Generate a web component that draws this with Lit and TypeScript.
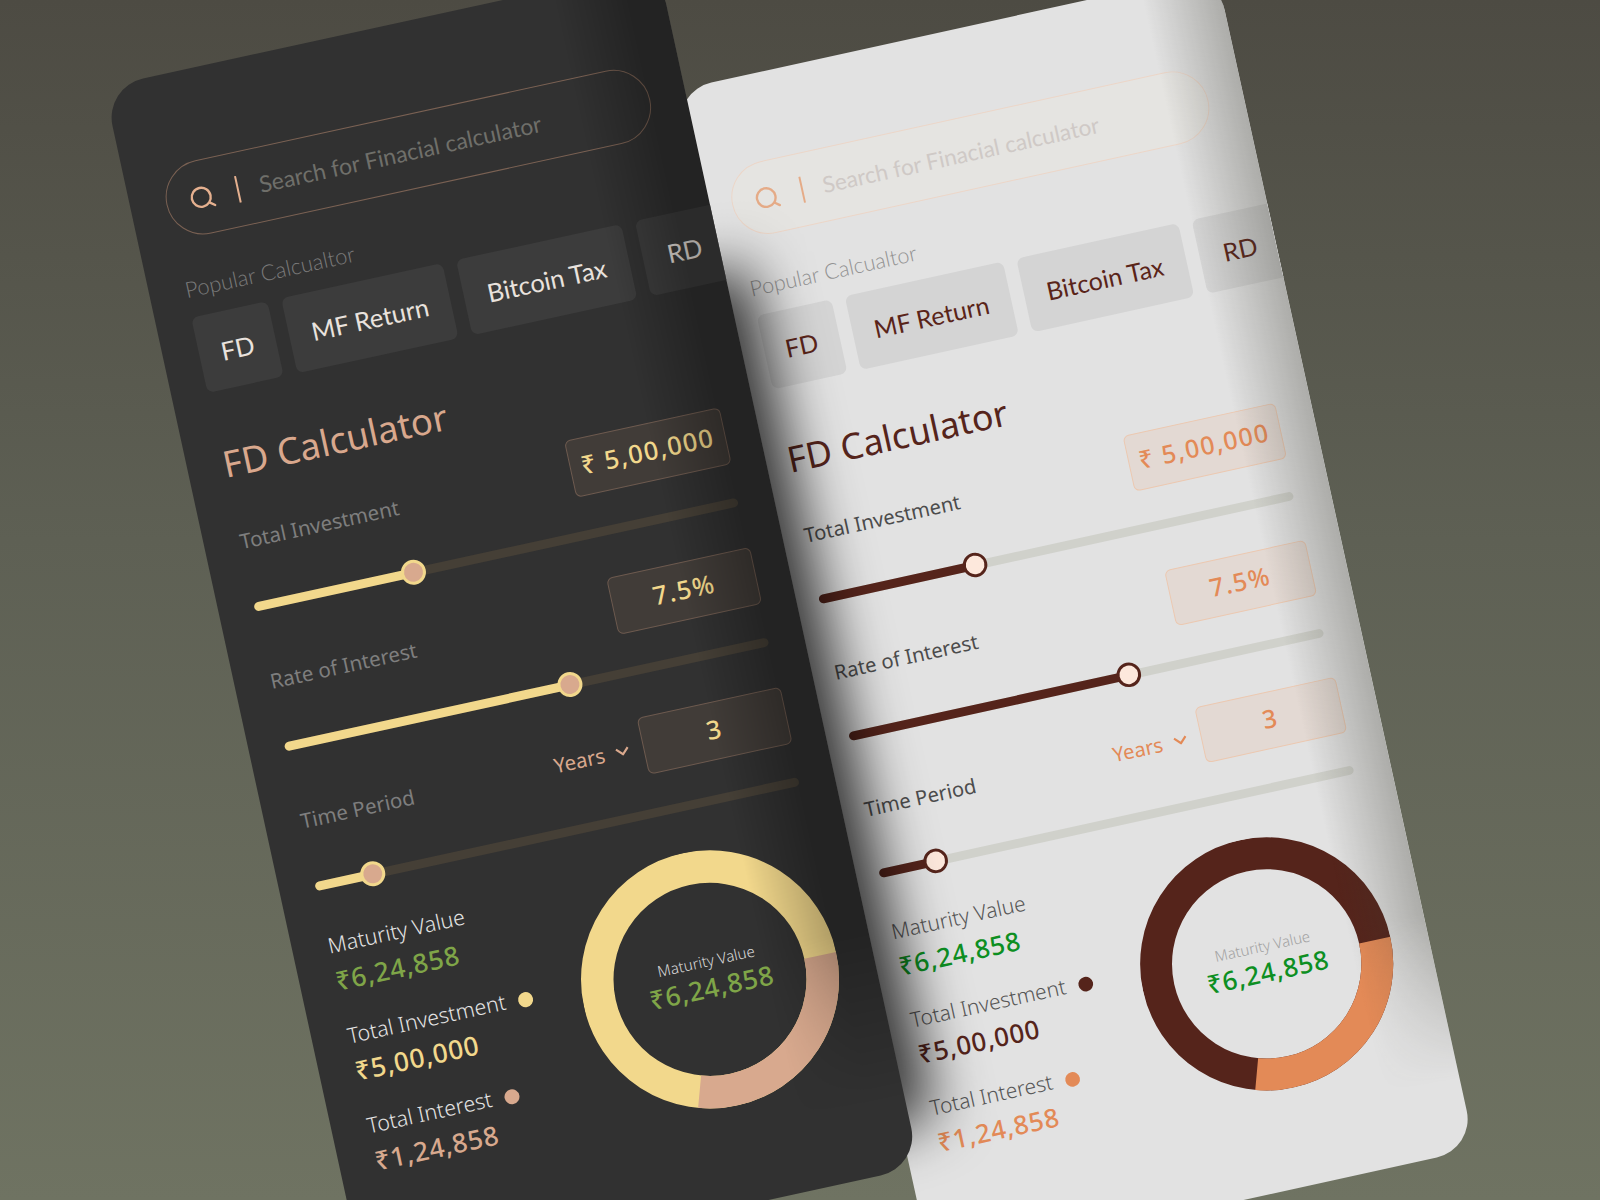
import { LitElement, html, css, svg } from "lit";
import { customElement, property } from "lit/decorators.js";

const SLIDERS = [
  { label: "Total Investment", value: "₹ 5,00,000", pct: 33, wide: true, unit: false },
  { label: "Rate of Interest", value: "7.5%", pct: 59, wide: false, unit: false },
  { label: "Time Period", value: "3", pct: 12, wide: false, unit: true },
];
const SUMMARY = [
  { label: "Maturity Value", value: "₹6,24,858", cls: "green", dot: "" },
  { label: "Total Investment", value: "₹5,00,000", cls: "invest", dot: "invest" },
  { label: "Total Interest", value: "₹1,24,858", cls: "interest", dot: "interest" },
];
const CHIPS = ["FD", "MF Return", "Bitcoin Tax", "RD"];

@customElement("fd-card")
class FdCard extends LitElement {
  @property() theme = "dark";

  static styles = css`
    :host { display: block; position: absolute; width: 567px; height: 1229px; transform-origin: 0 0; }
    :host([theme="dark"]) {
      left: 104px; top: 87.4px; transform: rotate(-12.3deg);
      --pad: 91px 36px 0 36px; --search-extra: 0px; --edge-start: 81%; --edge-end: 94%;
      --card: #313131; --chip: #3c3c3c; --chip-text: #e9e2dd; --search-border: #7a6153; --search-bg: transparent;
      --placeholder: #6f6f6a; --popular: #7a7a7a; --icon: #e5b08f; --title: #d9a88d; --box: #413c38;
      --box-border: #6d5a4f; --value: #f2d88c; --track: #453f36; --fill: #f2d88c; --thumb: #d8a98e;
      --label: #7e7e7e; --years: #d9a88d; --list: #e4e4e4; --green: #7fa548; --invest: #f2d88c;
      --interest: #d8a98e; --center: #d8d8d8; --edge: rgba(0, 0, 0, 0.28);
    }
    :host([theme="light"]) {
      left: 672.9px; top: 90.8px; transform: rotate(-12.4deg) scale(0.981);
      --pad: 89px 38.5px 0 33.5px; --search-extra: 2.5px; --edge-start: 86%; --edge-end: 100%;
      --card: #e2e2e2; --chip: #d4d4d4; --chip-text: #5a2419; --search-border: #ecd6c8; --search-bg: #e5e4e1;
      --placeholder: #cfc9c6; --popular: #929292; --icon: #e5ab87; --title: #55241b; --box: #e3d9d3;
      --box-border: #ecc8b0; --value: #e38a57; --track: #d0d1cb; --fill: #55241b; --thumb: #fde8dc;
      --label: #4c4c4c; --years: #e38a57; --list: #565656; --green: #0d8f22; --invest: #55241b;
      --interest: #e38a57; --center: #a2a2a2; --edge: rgba(60, 60, 50, 0.32);
    }
    .card {
      position: relative; box-sizing: border-box; width: 100%; height: 100%; padding: var(--pad);
      background: var(--card); border-radius: 40px; overflow: hidden; display: flex; flex-direction: column;
      font-family: "Noto Sans", sans-serif;
    }
    .search {
      flex: none; box-sizing: border-box; height: 75px; margin-right: calc(0px - var(--search-extra));
      border: 1.5px solid var(--search-border); border-radius: 38px;
      background: var(--search-bg); display: flex; align-items: center; padding-left: 23px;
    }
    .search svg { flex: none; width: 26px; height: 24px; fill: none; stroke: var(--icon); stroke-width: 2.4; stroke-linecap: round; }
    .divider { flex: none; width: 2px; height: 27px; background: var(--icon); margin: 0 21px 0 22px; }
    .placeholder { font: 400 23px "Lato", "Noto Sans", sans-serif; color: var(--placeholder); white-space: nowrap; padding-bottom: 2px; }
    .popular { margin-top: 37px; font: 300 22px/26px "Lato", "Noto Sans", sans-serif; color: var(--popular); white-space: nowrap; }
    .chips { flex: none; display: flex; gap: 14px; margin-top: 15px; height: 77px; }
    .chip {
      flex: none; display: flex; align-items: center; justify-content: center; width: 85px; background: var(--chip); border-radius: 7px;
      font: 400 25.5px "Lato", "Noto Sans", sans-serif; color: var(--chip-text); white-space: nowrap;
    }
    .chip:nth-child(1) { width: 78px; }
    .chip:nth-child(2) { width: 165px; }
    .chip:nth-child(3) { width: 169px; }
    .title { margin-top: 51px; font-size: 36.6px; line-height: 44px; font-weight: 400; color: var(--title); white-space: nowrap; }
    .rows { margin-top: 28px; display: flex; flex-direction: column; gap: 42.5px; }
    .head { display: flex; align-items: center; justify-content: space-between; height: 58px; margin-right: -2px; }
    .label { font-size: 20.6px; line-height: 26px; color: var(--label); white-space: nowrap; }
    .right { display: flex; align-items: center; gap: 14px; }
    .years { display: flex; align-items: center; gap: 11px; font-size: 20.5px; color: var(--years); }
    .years svg { width: 14px; height: 9px; fill: none; stroke: var(--years); stroke-width: 2.2; }
    .box {
      box-sizing: border-box; width: 147px; height: 58px; padding-bottom: 4px; border: 1px solid var(--box-border); border-radius: 6px;
      background: var(--box); display: flex; align-items: center; justify-content: center;
      font-size: 25.5px; font-weight: 550; letter-spacing: 1.3px; color: var(--value);
    }
    .box.wide { width: 159px; }
    .track { position: relative; height: 9px; margin-top: 33.5px; background: var(--track); border-radius: 4.5px; }
    .fill { height: 100%; background: var(--fill); border-radius: 4.5px; }
    .thumb {
      position: absolute; top: 50%; width: 25px; height: 25px; box-sizing: border-box; transform: translate(-50%, -50%);
      border: 3.5px solid var(--fill); border-radius: 50%; background: var(--thumb);
    }
    .summary { margin-top: 41px; display: flex; justify-content: space-between; }
    .list { display: flex; flex-direction: column; gap: 26px; padding-top: 2px; }
    .item-label { display: flex; align-items: center; gap: 13px; font-size: 21.4px; font-weight: 300; line-height: 26px; color: var(--list); white-space: nowrap; }
    .dot { width: 15px; height: 15px; border-radius: 50%; margin-top: 5px; }
    .dot.invest { background: var(--invest); }
    .dot.interest { background: var(--interest); }
    .item-value { margin-top: 6px; font-size: 26.4px; line-height: 34px; font-weight: 550; letter-spacing: 0.7px; white-space: nowrap; }
    .green { color: var(--green); }
    .invest { color: var(--invest); }
    .interest { color: var(--interest); }
    .donut { position: relative; flex: none; width: 258px; height: 258px; }
    .donut svg { display: block; width: 100%; height: 100%; fill: none; stroke-width: 32.5; }
    .center { position: absolute; inset: 0; display: flex; flex-direction: column; align-items: center; justify-content: center; padding-bottom: 4px; }
    .center-label { font-size: 15.2px; font-weight: 300; color: var(--center); white-space: nowrap; }
    .center-value { font-size: 26.4px; line-height: 34px; font-weight: 550; letter-spacing: 0.7px; color: var(--green); white-space: nowrap; }
    .edge {
      position: absolute; inset: 0; pointer-events: none;
      background: linear-gradient(to right, transparent var(--edge-start), var(--edge) var(--edge-end));
      -webkit-mask-image: linear-gradient(to bottom, #000 80%, transparent 94%);
      mask-image: linear-gradient(to bottom, #000 80%, transparent 94%);
    }
    .cast {
      position: absolute; left: -60px; top: 190px; width: 95px; height: 890px; background: rgba(0, 0, 0, 0.8);
      filter: blur(30px); pointer-events: none;
    }
  `;

  render() {
    const r = 112.75;
    const c = 2 * Math.PI * r;
    const part = (107.5 / 360) * c;
    return html`
      <div class="card">
        <div class="search">
          <svg viewBox="0 0 26 24"><circle cx="11.5" cy="11.5" r="9.5"></circle><path d="M19 18.5 L23.5 22"></path></svg>
          <div class="divider"></div>
          <div class="placeholder">Search for Finacial calculator</div>
        </div>
        <div class="popular">Popular Calcualtor</div>
        <div class="chips">${CHIPS.map((t) => html`<div class="chip">${t}</div>`)}</div>
        <div class="title">FD Calculator</div>
        <div class="rows">
          ${SLIDERS.map(
            (s) => html`
              <div>
                <div class="head">
                  <div class="label">${s.label}</div>
                  <div class="right">
                    ${s.unit
                      ? html`<div class="years">Years<svg viewBox="0 0 14 9"><path d="M1 1.5 L7 7.5 L13 1.5"></path></svg></div>`
                      : ""}
                    <div class="box ${s.wide ? "wide" : ""}">${s.value}</div>
                  </div>
                </div>
                <div class="track">
                  <div class="fill" style="width:${s.pct}%"></div>
                  <div class="thumb" style="left:${s.pct}%"></div>
                </div>
              </div>
            `
          )}
        </div>
        <div class="summary">
          <div class="list">
            ${SUMMARY.map(
              (s) => html`
                <div>
                  <div class="item-label">${s.label}${s.dot ? html`<span class="dot ${s.dot}"></span>` : ""}</div>
                  <div class="item-value ${s.cls}">${s.value}</div>
                </div>
              `
            )}
          </div>
          <div class="donut">
            <svg viewBox="0 0 258 258">
              ${svg`<circle cx="129" cy="129" r="${r}" stroke="var(--invest)"></circle>
              <circle cx="129" cy="129" r="${r}" stroke="var(--interest)" stroke-dasharray="${part} ${c - part}"></circle>`}
            </svg>
            <div class="center">
              <div class="center-label">Maturity Value</div>
              <div class="center-value">₹6,24,858</div>
            </div>
          </div>
        </div>
        ${this.theme === "light" ? html`<div class="cast"></div>` : ""}
        <div class="edge"></div>
      </div>
    `;
  }
}

@customElement("app-root")
class AppRoot extends LitElement {
  static styles = css`
    :host {
      display: block; position: relative; width: 1600px; height: 1200px; overflow: hidden;
      background: linear-gradient(to bottom, #4d4b43 0%, #5e6054 45%, #6f7362 100%);
    }
  `;
  render() {
    return html`<fd-card theme="light"></fd-card><fd-card theme="dark"></fd-card>`;
  }
}
